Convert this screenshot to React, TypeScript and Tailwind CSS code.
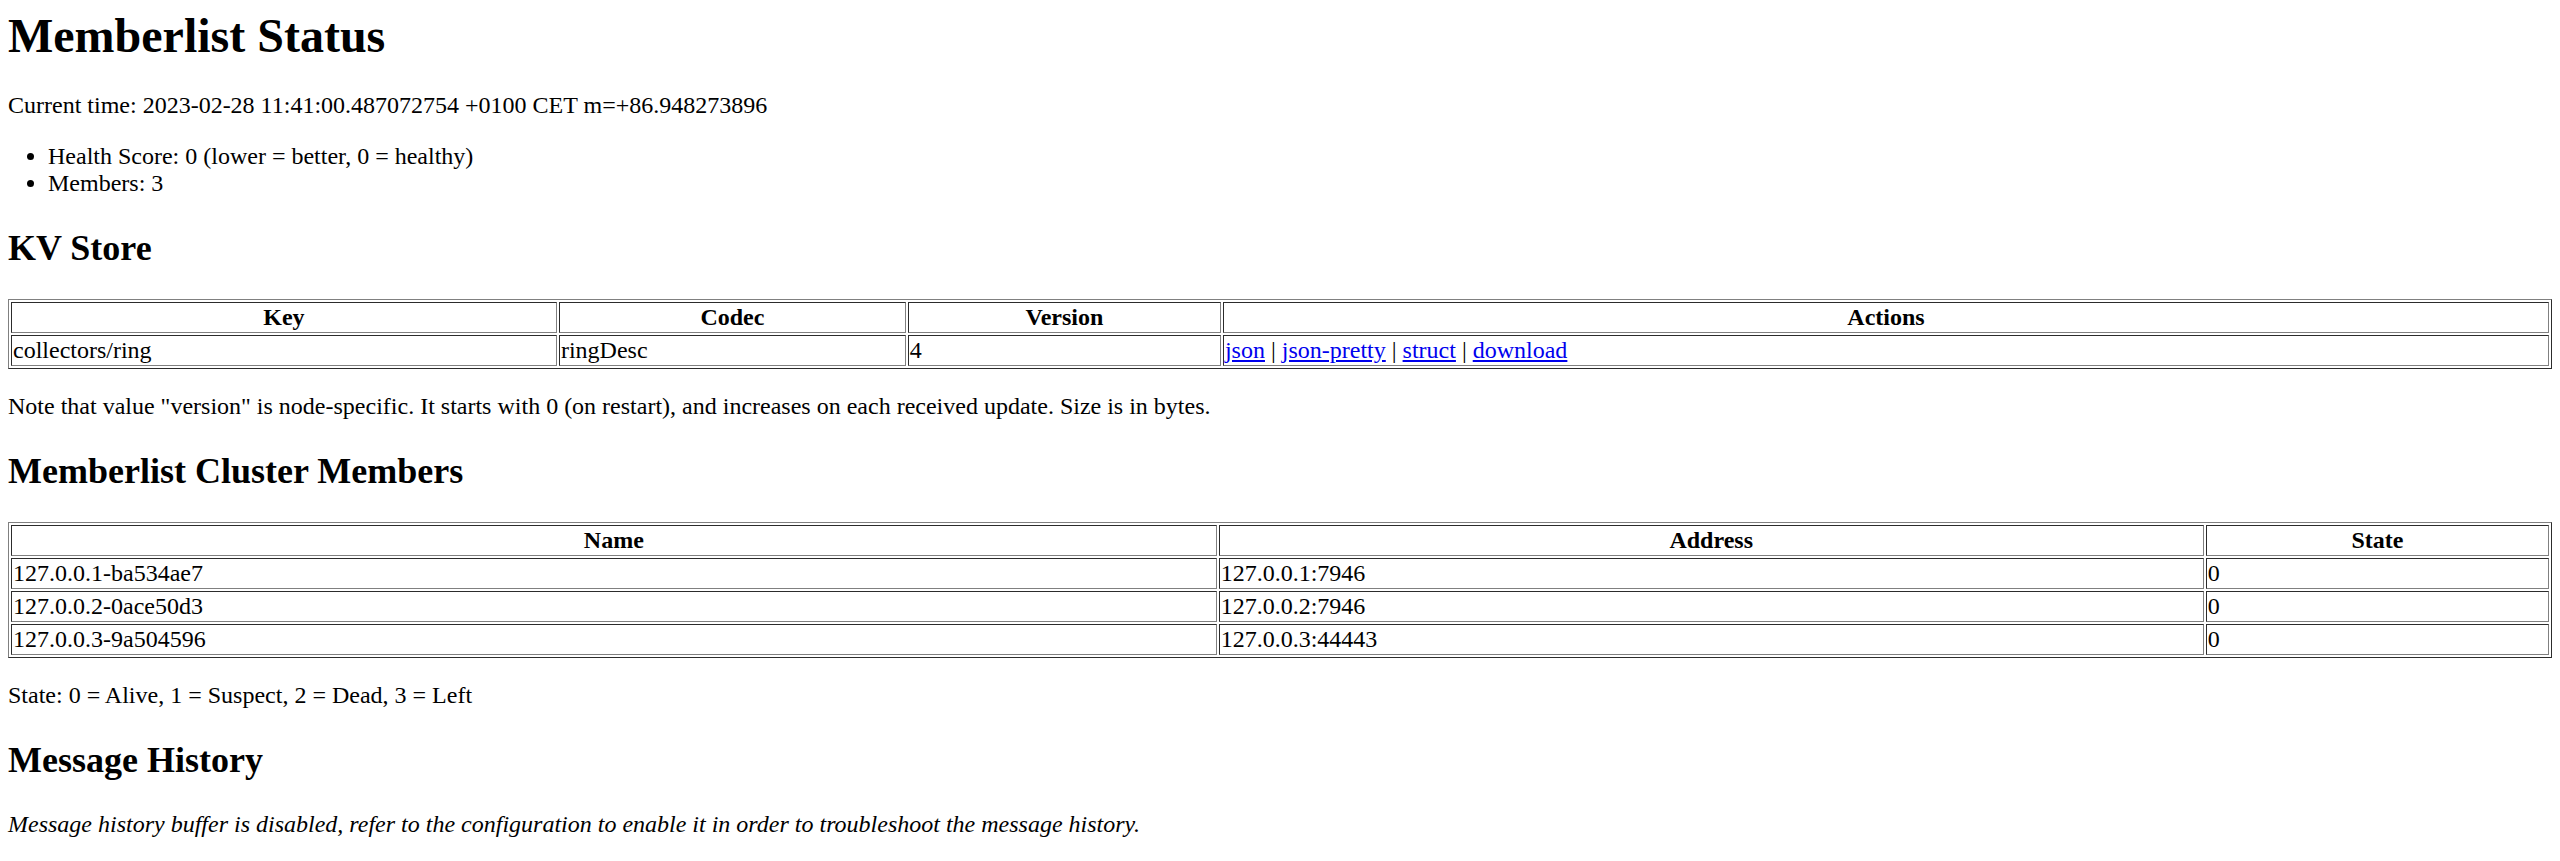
const MEMBERS = [
  { name: "127.0.0.1-ba534ae7", address: "127.0.0.1:7946", state: "0" },
  { name: "127.0.0.2-0ace50d3", address: "127.0.0.2:7946", state: "0" },
  { name: "127.0.0.3-9a504596", address: "127.0.0.3:44443", state: "0" },
];

const ACTIONS = ["json", "json-pretty", "struct", "download"];

const tableCls =
  "w-full border-separate border-spacing-[2px] border border-[gray] [border-style:outset]";
const thCls = "border border-[gray] [border-style:inset] p-px text-center font-bold";
const tdCls = "border border-[gray] [border-style:inset] p-px text-left font-normal";

export default function App() {
  return (
    <div className="min-h-screen bg-white p-2 font-['Liberation_Serif',serif] text-[24px] leading-[normal] text-black">
      <h1 className="mt-0 mb-[29px] text-[48px] font-bold">Memberlist Status</h1>

      <p className="my-6">
        Current time: 2023-02-28 11:41:00.487072754 +0100 CET m=+86.948273896
      </p>

      <ul className="my-6 list-outside list-disc pl-10">
        <li>Health Score: 0 (lower = better, 0 = healthy)</li>
        <li>Members: 3</li>
      </ul>

      <h2 className="my-[30px] text-[36px] font-bold">KV Store</h2>

      <table className={tableCls}>
        <thead>
          <tr>
            <th className={thCls}>Key</th>
            <th className={thCls}>Codec</th>
            <th className={thCls}>Version</th>
            <th className={thCls}>Actions</th>
          </tr>
        </thead>
        <tbody>
          <tr>
            <td className={tdCls}>collectors/ring</td>
            <td className={tdCls}>ringDesc</td>
            <td className={tdCls}>4</td>
            <td className={tdCls}>
              {ACTIONS.map((a, i) => (
                <span key={a}>
                  {i > 0 && " | "}
                  <a href="#" className="text-[#0000ee] underline">
                    {a}
                  </a>
                </span>
              ))}
            </td>
          </tr>
        </tbody>
      </table>

      <p className="my-6">
        Note that value "version" is node-specific. It starts with 0 (on restart), and increases on
        each received update. Size is in bytes.
      </p>

      <h2 className="my-[30px] text-[36px] font-bold">Memberlist Cluster Members</h2>

      <table className={tableCls}>
        <thead>
          <tr>
            <th className={thCls}>Name</th>
            <th className={thCls}>Address</th>
            <th className={thCls}>State</th>
          </tr>
        </thead>
        <tbody>
          {MEMBERS.map(m => (
            <tr key={m.name}>
              <td className={tdCls}>{m.name}</td>
              <td className={tdCls}>{m.address}</td>
              <td className={tdCls}>{m.state}</td>
            </tr>
          ))}
        </tbody>
      </table>

      <p className="my-6">State: 0 = Alive, 1 = Suspect, 2 = Dead, 3 = Left</p>

      <h2 className="my-[30px] text-[36px] font-bold">Message History</h2>

      <p className="my-6">
        <i>
          Message history buffer is disabled, refer to the configuration to enable it in order to
          troubleshoot the message history.
        </i>
      </p>
    </div>
  );
}
